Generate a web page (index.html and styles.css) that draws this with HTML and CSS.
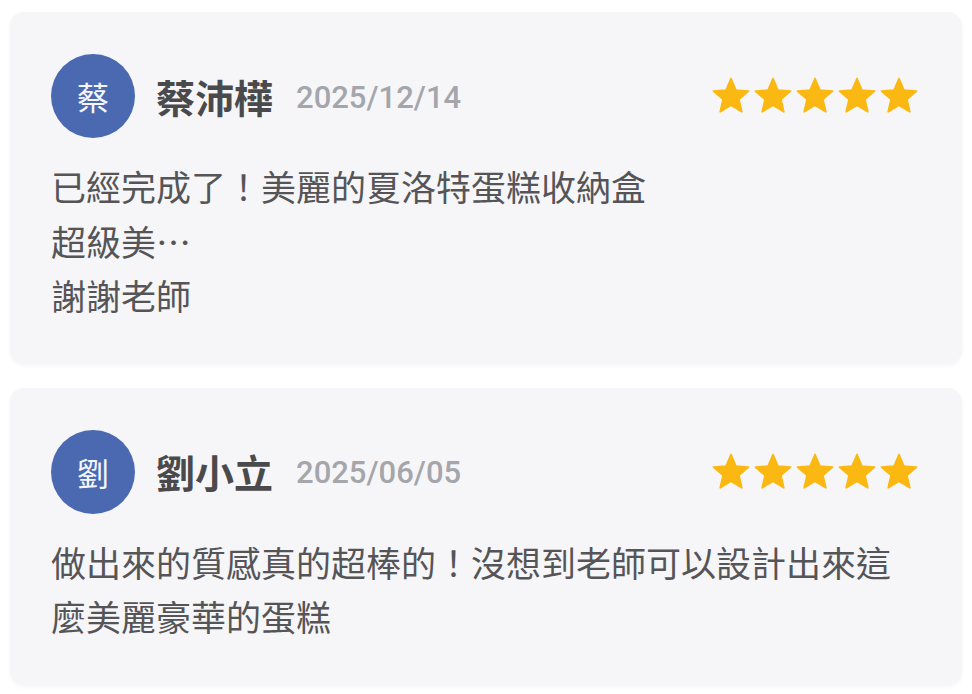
FILE: index.html
```html
<!DOCTYPE html>
<html lang="zh-Hant">
<head>
<meta charset="utf-8">
<title>評價</title>
<link rel="stylesheet" href="styles.css">
</head>
<body>
<div class="list">
  <div class="card">
    <div class="head">
      <div class="avatar">蔡</div>
      <div class="name">蔡沛樺</div>
      <div class="date">2025/12/14</div>
      <div class="stars">
        <svg viewBox="0 0 24 24"><path d="M12 17.27L18.18 21l-1.64-7.03L22 9.24l-7.19-.61L12 2 9.19 8.63 2 9.24l5.46 4.73L5.82 21z"/></svg>
        <svg viewBox="0 0 24 24"><path d="M12 17.27L18.18 21l-1.64-7.03L22 9.24l-7.19-.61L12 2 9.19 8.63 2 9.24l5.46 4.73L5.82 21z"/></svg>
        <svg viewBox="0 0 24 24"><path d="M12 17.27L18.18 21l-1.64-7.03L22 9.24l-7.19-.61L12 2 9.19 8.63 2 9.24l5.46 4.73L5.82 21z"/></svg>
        <svg viewBox="0 0 24 24"><path d="M12 17.27L18.18 21l-1.64-7.03L22 9.24l-7.19-.61L12 2 9.19 8.63 2 9.24l5.46 4.73L5.82 21z"/></svg>
        <svg viewBox="0 0 24 24"><path d="M12 17.27L18.18 21l-1.64-7.03L22 9.24l-7.19-.61L12 2 9.19 8.63 2 9.24l5.46 4.73L5.82 21z"/></svg>
      </div>
    </div>
    <p class="text">已經完成了！美麗的夏洛特蛋糕收納盒<br>超級美…<br>謝謝老師</p>
  </div>
  <div class="card">
    <div class="head">
      <div class="avatar">劉</div>
      <div class="name">劉小立</div>
      <div class="date">2025/06/05</div>
      <div class="stars">
        <svg viewBox="0 0 24 24"><path d="M12 17.27L18.18 21l-1.64-7.03L22 9.24l-7.19-.61L12 2 9.19 8.63 2 9.24l5.46 4.73L5.82 21z"/></svg>
        <svg viewBox="0 0 24 24"><path d="M12 17.27L18.18 21l-1.64-7.03L22 9.24l-7.19-.61L12 2 9.19 8.63 2 9.24l5.46 4.73L5.82 21z"/></svg>
        <svg viewBox="0 0 24 24"><path d="M12 17.27L18.18 21l-1.64-7.03L22 9.24l-7.19-.61L12 2 9.19 8.63 2 9.24l5.46 4.73L5.82 21z"/></svg>
        <svg viewBox="0 0 24 24"><path d="M12 17.27L18.18 21l-1.64-7.03L22 9.24l-7.19-.61L12 2 9.19 8.63 2 9.24l5.46 4.73L5.82 21z"/></svg>
        <svg viewBox="0 0 24 24"><path d="M12 17.27L18.18 21l-1.64-7.03L22 9.24l-7.19-.61L12 2 9.19 8.63 2 9.24l5.46 4.73L5.82 21z"/></svg>
      </div>
    </div>
    <p class="text">做出來的質感真的超棒的！沒想到老師可以設計出來這麼美麗豪華的蛋糕</p>
  </div>
</div>
</body>
</html>
```

FILE: styles.css
```css
* { box-sizing: border-box; }
html, body { margin: 0; background: #ffffff; }
body {
  padding: 12px 10px;
  font-family: "Noto Sans CJK TC", "Noto Sans", sans-serif;
}
.list {
  display: flex;
  flex-direction: column;
  gap: 24px;
}
.card {
  background: #f6f6f8;
  border-radius: 14px;
  padding: 42px 42px 41px 41px;
  box-shadow: 0 2px 4px rgba(0, 0, 0, 0.04);
}
.head {
  display: flex;
  align-items: center;
  height: 84px;
}
.avatar {
  width: 84px;
  height: 84px;
  flex: none;
  border-radius: 50%;
  background: #4a69b1;
  color: #f4f6fb;
  font-size: 32px;
  line-height: 1;
  display: flex;
  align-items: center;
  justify-content: center;
}
.name {
  margin-left: 21px;
  font-size: 39px;
  font-weight: 700;
  color: #4a4a4c;
  line-height: 1;
}
.date {
  margin-left: 23px;
  font-family: Roboto, "Noto Sans", sans-serif;
  font-size: 31px;
  font-weight: 500;
  color: #a4a6ac;
  line-height: 1;
  margin-top: 2px;
}
.stars {
  margin-left: auto;
  display: flex;
}
.stars svg {
  width: 42px;
  height: 42px;
  display: block;
  fill: #fbb812;
  stroke: #fbb812;
  stroke-width: 1;
  stroke-linejoin: round;
}
.text {
  margin: 21px 0 0;
  font-size: 35px;
  line-height: 54.5px;
  color: #555558;
}
```
